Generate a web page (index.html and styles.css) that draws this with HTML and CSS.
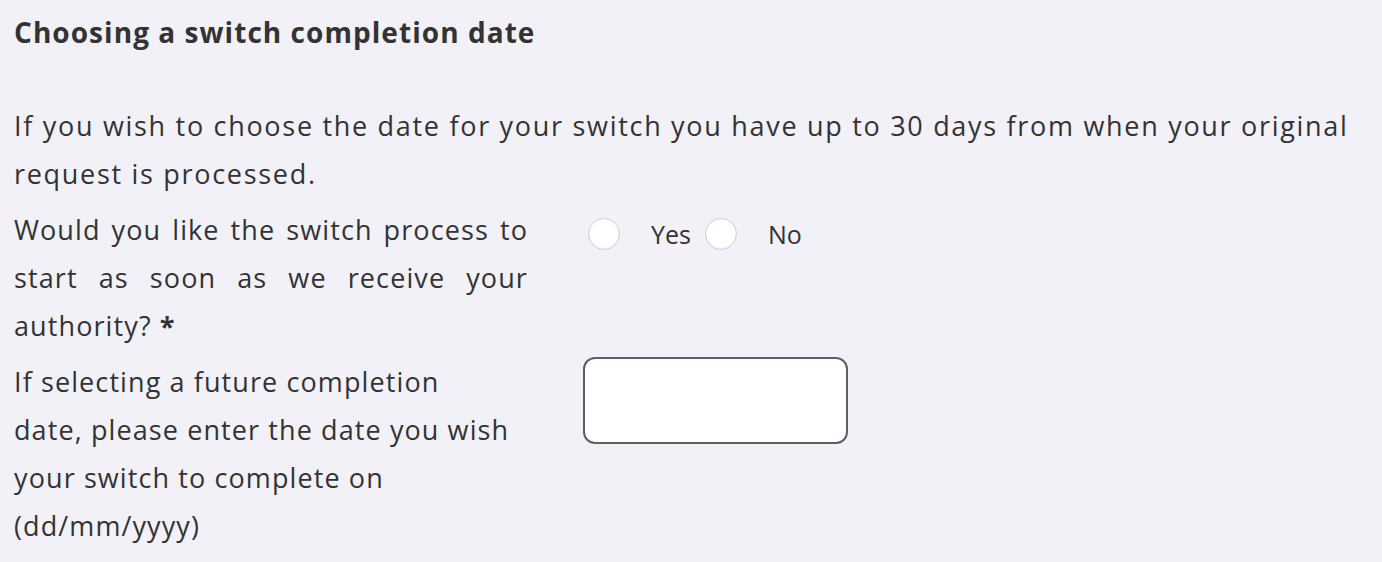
FILE: index.html
```html
<!DOCTYPE html>
<html lang="en">
<head>
<meta charset="UTF-8" />
<title>Switch completion date</title>
<link rel="stylesheet" href="styles.css">
</head>
<body>
  <section class="panel">
    <h2>Choosing a switch completion date</h2>
    <p class="intro">If you wish to choose the date for your switch you have up to 30 days from when your original request is processed.</p>

    <div class="field">
      <label class="question justify">Would you like the switch process to start as soon as we receive your authority?&nbsp;<span class="req">*</span></label>
      <div class="choices">
        <input type="radio" id="startYes" name="startNow" value="yes" />
        <label for="startYes">Yes</label>
        <input type="radio" id="startNo" name="startNow" value="no" />
        <label for="startNo">No</label>
      </div>
    </div>

    <div class="field">
      <label class="question" for="completeDate">If selecting a future completion<br>date, please enter the date you wish<br>your switch to complete on<br>(dd/mm/yyyy)</label>
      <div>
        <input type="text" id="completeDate" class="date-input" />
      </div>
    </div>
  </section>
</body>
</html>
```

FILE: styles.css
```css
* {
  box-sizing: border-box;
}
html, body {
  margin: 0;
  padding: 0;
  background: #f2f1f8;
  color: #333;
  font-family: 'Open Sans', 'Noto Sans', sans-serif;
}
.panel {
  padding: 10px 14px 0 14px;
}
h2 {
  margin: 0 0 48px 0;
  font-size: 28px;
  line-height: 44px;
  font-weight: 700;
  letter-spacing: 1.05px;
}
.intro {
  margin: 0 0 8px 0;
  font-size: 27px;
  line-height: 48px;
  letter-spacing: 1.7px;
}
.field {
  display: grid;
  grid-template-columns: 514px auto;
  column-gap: 55px;
  margin-bottom: 8px;
  font-size: 27px;
  line-height: 48px;
  letter-spacing: 1.1px;
}
.question.justify {
  text-align: justify;
}
.req {
  font-weight: 700;
}
.choices {
  display: flex;
  align-items: center;
  height: 48px;
  padding-left: 5px;
  margin-top: 4px;
}
.choices input[type="radio"] {
  appearance: none;
  -webkit-appearance: none;
  margin: 0;
  width: 32px;
  height: 32px;
  border-radius: 50%;
  background: #fff;
  border: 1px solid #cfcfd4;
  box-shadow: inset 0 -1px 2px rgba(0,0,0,0.06);
}
.choices label {
  font-size: 25px;
  letter-spacing: 0;
  margin: 0 14px 0 31px;
}
.date-input {
  margin-top: -1px;
  width: 265px;
  height: 87px;
  border: 2px solid #5f5e64;
  border-radius: 12px;
  background: #fff;
  font-size: 26px;
  padding: 0 14px;
}
```
